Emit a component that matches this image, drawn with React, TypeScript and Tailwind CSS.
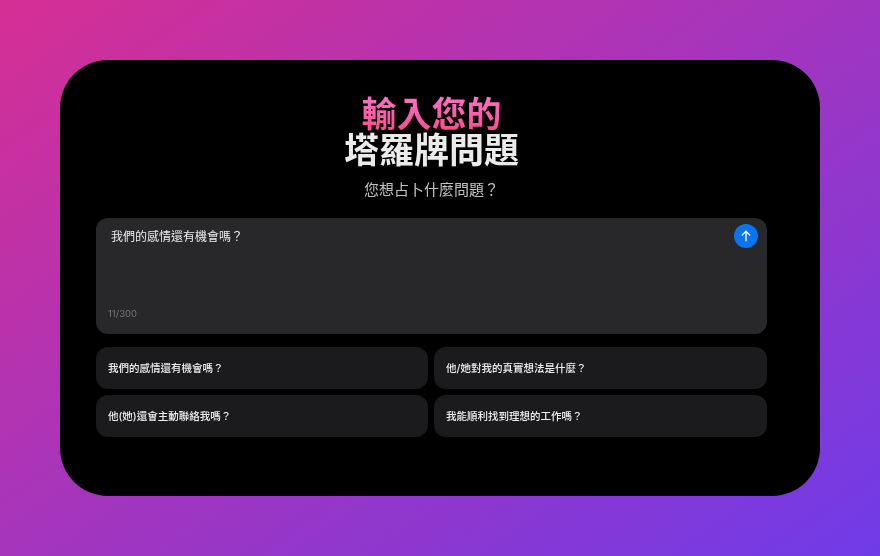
import React from "react";

function Chip({ text }: { text: string }) {
  return (
    <button className="h-[41.5px] rounded-[12px] bg-[#1b1b1d] px-3 text-left text-[10.5px] font-medium leading-[43px] text-[#f0f0f0]">
      {text}
    </button>
  );
}

export default function App() {
  return (
    <div className="flex h-[556px] w-[880px] items-center justify-center overflow-hidden bg-[linear-gradient(145deg,#d62f94_0%,#6f3be8_100%)] font-['Inter','Noto_Sans_CJK_TC',sans-serif]">
      <div className="h-[436px] w-[760px] rounded-[48px] bg-black pb-9 pl-9 pr-[53px] pt-9 opacity-[0.996]">
        <div className="flex flex-col items-center">
          <h1 className="text-center text-[35px] font-bold leading-[36px]">
            <span className="block bg-gradient-to-b from-[#ff72c8] to-[#f94a8e] bg-clip-text text-transparent">輸入您的</span>
            <span className="block text-[#ececec]">塔羅牌問題</span>
          </h1>
          <p className="mt-[11px] text-[15px] leading-[22px] text-[#c4c4c6]">您想占卜什麼問題？</p>
        </div>
        <div className="relative mt-[17px] h-[116px] rounded-[12px] bg-[#28282a] px-[15px] pt-[10px]">
          <p className="text-[12px] leading-[18px] text-[#ececec]">我們的感情還有機會嗎？</p>
          <span className="absolute bottom-[14px] left-3 text-[9.5px] leading-[12px] text-[#77777a]">11/300</span>
          <button className="absolute right-[9px] top-[6px] flex h-6 w-6 items-center justify-center rounded-full bg-[#0a74f0]">
            <svg width="14" height="14" viewBox="0 0 24 24" fill="none" stroke="white" strokeWidth="2.4" strokeLinecap="round" strokeLinejoin="round">
              <path d="M12 20V4" />
              <path d="M5.5 10.5 12 4l6.5 6.5" />
            </svg>
          </button>
        </div>
        <div className="mt-[13px] grid grid-cols-[332px_1fr] gap-x-[6px] gap-y-[6.5px]">
          <Chip text="我們的感情還有機會嗎？" />
          <Chip text="他/她對我的真實想法是什麼？" />
          <Chip text="他(她)還會主動聯絡我嗎？" />
          <Chip text="我能順利找到理想的工作嗎？" />
        </div>
      </div>
    </div>
  );
}
